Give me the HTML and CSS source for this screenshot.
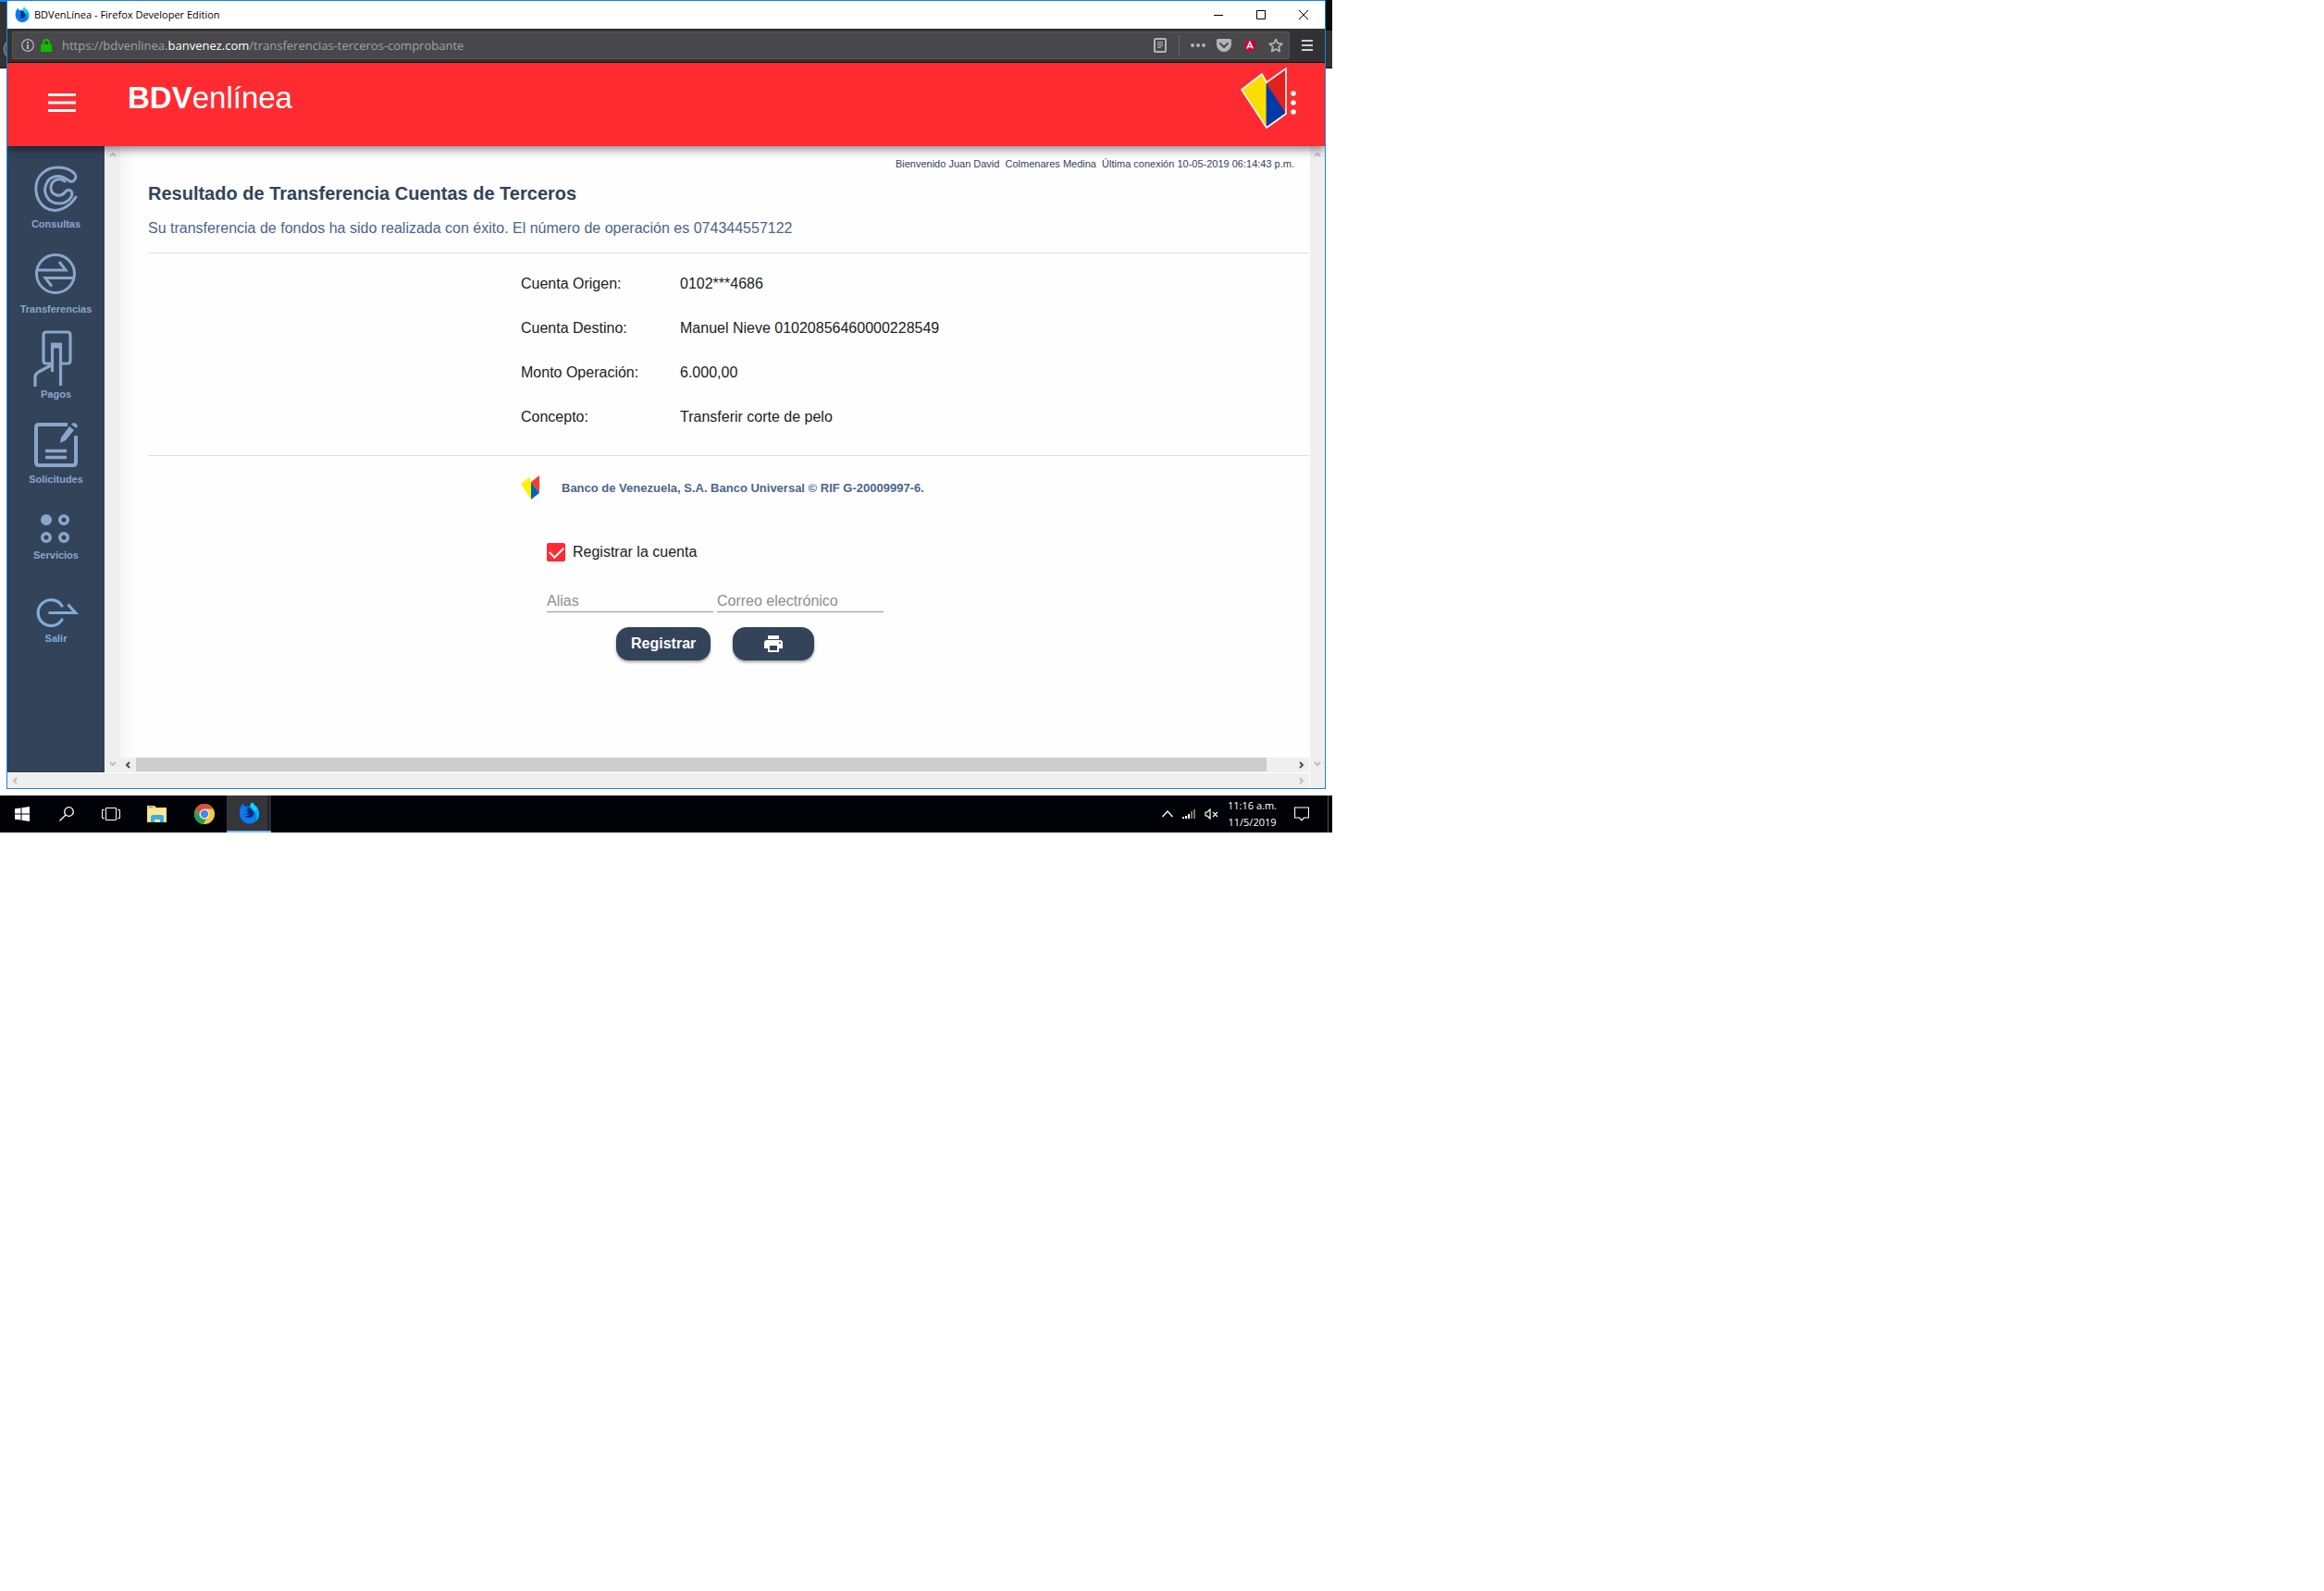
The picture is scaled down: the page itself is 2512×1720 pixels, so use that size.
FILE: index.html
```html
<!DOCTYPE html>
<html lang="es">
<head>
<meta charset="utf-8">
<title>BDVenLínea</title>
<link rel="stylesheet" href="styles.css">
</head>
<body>
<svg class="defs" aria-hidden="true">
  <symbol id="fox" viewBox="0 0 24 24">
    <path d="M1 12C1 8 2 4 5 1l2 4c2-1 4-1 6 0 0-2 1-4 3-5 0 2 2 3 4 5 2 2 3 5 3 8 0 6-5 11-11 11S1 19 1 12z" fill="#0a78f5"/>
    <path d="M16 0c0 2 2 3 4 5 2 2 3 5 3 8 0 3-1 6-3 8 1-4 0-8-2-11s-5-4-5-6 1-3 3-4z" fill="#00b8f8"/>
    <path d="M16 0c0 2 2 3 4 5l1 2c-2 1-3 3-3 3-2-3-5-4-5-6s1-3 3-4z" fill="#00ddff"/>
    <path d="M9 6c3-1 6 1 6 3 2 1 3 4 1 6-2 3-7 3-9 0 2 1 4 0 5-1l-5-1 3-1 1-1-3-2 3-1z" fill="#0b2a70"/>
  </symbol>
  <symbol id="up" viewBox="0 0 8 6"><path d="M1 5l3-3 3 3" fill="none" stroke="currentColor" stroke-width="2"/></symbol>
  <symbol id="down" viewBox="0 0 8 6"><path d="M1 1l3 3 3-3" fill="none" stroke="currentColor" stroke-width="2"/></symbol>
  <symbol id="left" viewBox="0 0 6 8"><path d="M5 1L2 4l3 3" fill="none" stroke="currentColor" stroke-width="2"/></symbol>
  <symbol id="right" viewBox="0 0 6 8"><path d="M1 1l3 3-3 3" fill="none" stroke="currentColor" stroke-width="2"/></symbol>
</svg>

<div class="desktop">
  <div class="stage">
    <div class="edge edge-left"></div>

    <section class="window">
      <div class="titlebar">
        <svg class="app-icon" width="16" height="16"><use href="#fox"/></svg>
        <span class="title">BDVenLínea - Firefox Developer Edition</span>
        <div class="controls">
          <button aria-label="Minimizar"><svg width="12" height="12"><path d="M1 6.500h10" stroke="#000"/></svg></button>
          <button aria-label="Maximizar"><svg width="12" height="12"><path d="M1.500 1.500h9v9h-9z" fill="none" stroke="#000"/></svg></button>
          <button aria-label="Cerrar"><svg width="12" height="12"><path d="M1 1l10 10M11 1L1 11" stroke="#000"/></svg></button>
        </div>
      </div>

      <div class="navbar">
        <div class="urlbar">
          <svg width="14" height="14"><circle cx="7" cy="7" r="6.300" fill="none" stroke="#b4b4b5" stroke-width="1.300"/><path d="M6 3h2v2H6zM6 6h2v5H6z" fill="#b4b4b5"/></svg>
          <svg class="lock" width="12" height="14"><path d="M0 6h12v8H0z" fill="#12bc00"/><path d="M3 7V4a3 3 0 0 1 6 0v3" fill="none" stroke="#12bc00" stroke-width="2"/></svg>
          <span class="url">https://bdvenlinea.<b>banvenez.com</b>/transferencias-terceros-comprobante</span>
          <svg class="reader" width="14" height="16"><rect x="1" y="1" width="12" height="14" rx="1" fill="none" stroke="#b4b4b5" stroke-width="2"/><path d="M4 4.500h6M4 6.500h6M4 8.500h6M4 10.500h4" stroke="#b4b4b5"/></svg>
          <span class="divider"></span>
          <svg class="dots" width="16" height="4" fill="#b4b4b5"><circle cx="2" cy="2" r="2"/><circle cx="8" cy="2" r="2"/><circle cx="14" cy="2" r="2"/></svg>
          <svg class="pocket" width="16" height="14"><path d="M1.500 0h13Q16 0 16 1.500V6a8 8 0 0 1-16 0V1.500Q0 0 1.500 0z" fill="#b4b4b5"/><path d="M4 5l4 4 4-4" fill="none" stroke="#48484a" stroke-width="2" stroke-linecap="round" stroke-linejoin="round"/></svg>
          <svg class="angular" width="12" height="13"><path d="M6 0l6 2-1 8-5 3-5-3L0 2z" fill="#dd0031"/><path d="M6 0l6 2-1 8-5 3z" fill="#c3002f"/><path d="M2.800 9.500L6 2.500l3.200 7M4 7.500h4" fill="none" stroke="#fff" stroke-width="1.500"/></svg>
          <svg class="star" width="16" height="16"><path d="M8 1.500l2 4.400 4.800.5-3.600 3.200 1.100 4.900L8 12l-4.300 2.500 1.100-4.900L1.200 6.400 6 5.900z" fill="none" stroke="#b4b4b5" stroke-width="1.800" stroke-linejoin="round"/></svg>
        </div>
        <button class="app-menu" aria-label="Menú"><svg width="12" height="12"><path d="M0 1h12M0 6h12M0 11h12" stroke="#d0d0d1" stroke-width="2"/></svg></button>
      </div>

      <header class="bank-header">
        <button class="burger" aria-label="Abrir menú"><svg width="30" height="20"><path d="M0 1.500h30M0 10h30M0 18.500h30" stroke="#fff" stroke-width="3"/></svg></button>
        <div class="brand"><b>BDV</b>enlínea</div>
        <svg class="bank-logo" width="52" height="68" viewBox="0 0 52 68">
          <path d="M2 25l22-17 5 9v48z" fill="#fbdd00"/>
          <path d="M29 17L50 2v50z" fill="#e2201c"/>
          <path d="M29 18l21 33-21 14z" fill="#0039a8"/>
          <path d="M28.500 19v44" stroke="#9aa13c" stroke-width="1"/>
          <path d="M2 25l22-17 5 9L50 2v49L29 66z" fill="none" stroke="#fff" stroke-width="1.600"/>
        </svg>
        <button class="more" aria-label="Más opciones"><svg width="6" height="26" fill="#fff"><circle cx="3" cy="3" r="2.800"/><circle cx="3" cy="13" r="2.800"/><circle cx="3" cy="23" r="2.800"/></svg></button>
      </header>

      <div class="page">
        <div class="page-view">
          <div class="page-row">
            <nav class="sidebar">
              <a href="#consultas"><svg viewBox="0 0 105 76" height="76" fill="none" stroke="#8ba6cc" stroke-width="3" stroke-linecap="round">
                <path d="M74 55C67 66 53 74 41 66.500C28 57 28 38 38 29C48 20 64 22 72 29C77 34 71 41 66 37C56 29 46 33 43 39C37 49 43 62 56 62C63 62 67 58 69 55C72 48 66 45 62 50C57 56 47 53 47 45C47 37 56 33 62 38"/></svg>Consultas</a>
              <a href="#transferencias"><svg viewBox="0 0 105 76" height="76" fill="none" stroke="#8ba6cc" stroke-width="3">
                <circle cx="52" cy="46" r="20.500"/><path d="M32 42h31l-7-9M72 50.500H41l7 9"/></svg>Transferencias</a>
              <a href="#pagos"><svg viewBox="0 0 105 76" height="76" fill="none" stroke="#8ba6cc" stroke-width="3.200">
                <path d="M47 51h-5q-3 0-3-3V20q0-3 3-3h23q3 0 3 3v28q0 3-3 3h-6M48.500 60V30h9v45M48 33h10M47 53l-13 7q-4 2-4 6v10"/></svg>Pagos</a>
              <a href="#solicitudes"><svg viewBox="0 0 105 76" height="76" fill="none" stroke="#8ba6cc" stroke-width="4">
                <path d="M65 25H34q-3 0-3 3v38q0 3 3 3h37q3 0 3-3V37" /><path d="M41 53.500h23M41 60.500h23" stroke-width="3.500"/><path d="M57 45l1-6 9-12 5 4-9 11zM69 25l2-2q3 0 5 3l-1 3z" fill="#8ba6cc" stroke="none"/></svg>Solicitudes</a>
              <a href="#servicios"><svg viewBox="0 0 105 66" height="66" fill="none" stroke="#8ba6cc" stroke-width="3.500">
                <circle cx="42" cy="36" r="4.300" fill="#8ba6cc"/><circle cx="61" cy="36" r="4.300"/><circle cx="42" cy="55" r="4.300"/><circle cx="61" cy="55" r="4.300"/></svg>Servicios</a>
              <a class="exit" href="#salir"><svg viewBox="0 0 105 74" height="74" fill="none" stroke="#7daedb" stroke-width="3.200">
                <path d="M59 47a14 14 0 1 0 0 15" stroke-linecap="round"/><path d="M44.500 54.500H73.500l-8-9"/></svg>Salir</a>
            </nav>
            <div class="vscroll">
              <svg width="8" height="6"><use href="#up"/></svg>
              <svg width="8" height="6"><use href="#down"/></svg>
            </div>

            <div class="content">
              <main class="result">
                <p class="welcome">Bienvenido Juan David&nbsp; Colmenares Medina&nbsp; Última conexión 10-05-2019 06:14:43 p.m.</p>
                <h1>Resultado de Transferencia Cuentas de Terceros</h1>
                <p class="message">Su transferencia de fondos ha sido realizada con éxito. El número de operación es 074344557122</p>
                <dl class="details">
                  <dt>Cuenta Origen:</dt><dd>0102***4686</dd>
                  <dt>Cuenta Destino:</dt><dd>Manuel Nieve 01020856460000228549</dd>
                  <dt>Monto Operación:</dt><dd>6.000,00</dd>
                  <dt>Concepto:</dt><dd>Transferir corte de pelo</dd>
                </dl>
                <div class="signature">
                  <svg width="20" height="26"><path d="M0 9l9-7 2 5v19z" fill="#fff200"/><path d="M11 7l9-7v19z" fill="#ff3b30"/><path d="M11 7l9 12-9 7z" fill="#0066b3"/></svg>
                  <span>Banco de Venezuela, S.A. Banco Universal © RIF G-20009997-6.</span>
                </div>
                <form class="register">
                  <label class="check"><input type="checkbox" checked><span>Registrar la cuenta</span></label>
                  <div class="fields">
                    <input type="text" placeholder="Alias" aria-label="Alias">
                    <input type="email" placeholder="Correo electrónico" aria-label="Correo electrónico">
                  </div>
                  <div class="actions">
                    <button type="button" class="pill">Registrar</button>
                    <button type="button" class="pill print" aria-label="Imprimir"><svg width="20" height="18" fill="#fff"><path d="M4 0h12v4H4zM3 5h14a3 3 0 0 1 3 3v6h-4v-3H4v3H0V8a3 3 0 0 1 3-3z"/><path d="M4 10h12v8H4z"/><path d="M6 11h8v5H6z" fill="#32435a"/><circle cx="17" cy="8" r="1" fill="#32435a"/></svg></button>
                  </div>
                </form>
              </main>
              <div class="hscroll hscroll-live">
                <svg width="6" height="8"><use href="#left"/></svg>
                <div class="thumb"></div>
                <svg width="6" height="8"><use href="#right"/></svg>
              </div>
            </div>
          </div>
          <div class="hscroll">
            <svg width="6" height="8"><use href="#left"/></svg>
            <svg width="6" height="8"><use href="#right"/></svg>
          </div>
        </div>
        <div class="vscroll vscroll-outer">
          <svg width="8" height="6"><use href="#up"/></svg>
          <svg width="8" height="6"><use href="#down"/></svg>
        </div>
      </div>
    </section>

    <div class="edge edge-right"></div>
  </div>

  <footer class="taskbar">
    <button aria-label="Inicio"><svg width="16" height="16" fill="#fff"><path d="M0 2.300l6.500-.9v6.100H0zM7.500 1.200L16 0v7.500H7.500zM0 8.500h6.500v6.100L0 13.700zM7.500 8.500H16V16l-8.500-1.200z"/></svg></button>
    <button aria-label="Buscar"><svg width="16" height="16" fill="none" stroke="#fff" stroke-width="1.300"><circle cx="10.500" cy="5.500" r="4.800"/><path d="M7 9l-6.500 6.500"/></svg></button>
    <button aria-label="Vista de tareas"><svg width="20" height="16" fill="none" stroke="#fff"><path d="M4.500 1.500h11v13h-11zM3 3.500H.5v9H3M17 3.500h2.500v9H17"/></svg></button>
    <button class="task-explorer" aria-label="Explorador de archivos"><svg width="22" height="18"><path d="M0 0h8l2 2h11v16H0z" fill="#ffd75e"/><path d="M1 3h20v14H1z" fill="#ffe794"/><path d="M4 18v-6q0-2 2-2h10q2 0 2 2v6h-4v-3H8v3z" fill="#35b1e8"/><path d="M2 1h4v1H2z" fill="#35b1e8"/></svg></button>
    <button class="task-chrome" aria-label="Chrome"><svg width="22" height="22" viewBox="0 0 22 22"><circle cx="11" cy="11" r="11" fill="#fbc93d"/><path d="M1.500 5.500A11 11 0 0 1 20.500 5.500H11A5.500 5.500 0 0 0 6 13z" fill="#d94f42"/><path d="M1.500 5.500L6.200 13.700A5.500 5.500 0 0 0 13 16L10 22A11 11 0 0 1 1.500 5.500z" fill="#1fa15e"/><circle cx="11" cy="11" r="5.300" fill="#f1f1f1"/><circle cx="11" cy="11" r="4.200" fill="#4a86f0"/></svg></button>
    <button class="active" aria-label="Firefox"><svg width="23" height="24"><use href="#fox"/></svg></button>
    <div class="tray">
      <svg width="12" height="8" fill="none" stroke="#fff" stroke-width="1.300"><path d="M.5 7L6 1l5.500 6"/></svg>
      <svg width="14" height="10"><path d="M0 8h2v2H0zM3 7h2v3H3zM6 5h2v5H6z" fill="#fff"/><path d="M9 2h2v8H9zM12 0h2v10h-2z" fill="#777"/></svg>
      <svg width="15" height="12" fill="none" stroke="#fff" stroke-width="1.200"><path d="M1 4h2l3-3v10L3 8H1zM9 4l5 5M14 4L9 9"/></svg>
      <time>11:16 a.m.<br>11/5/2019</time>
      <svg width="16" height="16" fill="none" stroke="#fff" stroke-width="1.200"><path d="M.5 1h15v11h-5L8 14.800 5.500 12h-5z"/></svg>
    </div>
  </footer>
</div>
</body>
</html>
```
FILE: styles.css
```css
* { box-sizing: border-box; }
body { margin: 0; background: #fff; font-family: "Liberation Sans", Arial, sans-serif; color: #212121; }
svg { display: block; flex: none; }
button { border: 0; padding: 0; margin: 0; background: none; font: inherit; color: inherit; display: flex; align-items: center; justify-content: center; flex: none; }
p, h1, dl, dd { margin: 0; }
.defs { position: absolute; width: 0; height: 0; }

.desktop { max-width: 1440px; }
.stage { display: flex; padding-bottom: 7px; }
.edge { width: 7px; height: 74px; background: #323234; border-bottom: 1px solid #0c0c0d; flex: none; }
.edge-left { border-top: 2px solid #0a84ff; background: radial-gradient(circle at 15px 51px, #59595b 10px, #77777a 10px, #77777a 11px, #323234 12px); }
.edge-right { border-top: 33px solid #0c0c0d; }

.window { flex: 1; min-width: 0; border: 1px solid #1a86d9; }

.titlebar { height: 30px; display: flex; align-items: center; padding-left: 8px; font: 11px/16px "Open Sans", "Noto Sans", sans-serif; color: #000; }
.title { margin-left: 5px; flex: 1; }
.controls { display: flex; }
.controls button { width: 46px; height: 30px; }

.navbar { height: 37px; display: flex; align-items: center; padding: 0 0 0 5px; background: #323234; border-bottom: 1px solid #0c0c0d; }
.urlbar { flex: 1; height: 30px; display: flex; align-items: center; padding: 0 6px 0 9px; background: #48484a; border: 1px solid #59595b; border-radius: 2px; }
.lock { margin-left: 7px; }
.url { flex: 1; margin-left: 11px; font: 13px/20px "Open Sans", "Noto Sans", sans-serif; color: #a2a2a3; white-space: nowrap; }
.url b { font-weight: 400; color: #fff; }
.divider { width: 1px; height: 22px; margin: 0 12px 0 13px; background: #5f6670; }
.pocket { margin-left: 12px; }
.angular { margin-left: 14px; }
.star { margin-left: 14px; }
.app-menu { width: 38px; height: 30px; }

.bank-header { position: relative; z-index: 1; height: 90px; display: flex; align-items: flex-start; padding: 0 31px 0 44px; background: #ff2b31; color: #fff; box-shadow: 0 3px 10px rgba(0, 0, 0, .5); clip-path: inset(0 0 -20px 0); }
.burger { margin-top: 33px; }
.brand { flex: 1; margin: 18px 0 0 56px; font-size: 33px; line-height: 40px; }
.bank-logo { margin-top: 4px; }
.more { margin-top: 30px; margin-left: 3px; }

.page { display: flex; background: #fff; }
.page-view { flex: 1; min-width: 0; }
.page-row { display: flex; }

.sidebar { width: 105px; flex: none; background: #32435a; }
.sidebar a { display: block; color: #8ba6cc; font-size: 11px; line-height: 16px; font-weight: 700; text-align: center; text-decoration: none; }
.sidebar svg { width: 105px; }
.sidebar .exit { color: #7daedb; }

.vscroll { width: 16px; margin-left: 1px; padding: 6px 0; display: flex; flex-direction: column; justify-content: space-between; align-items: center; background: #efefef; color: #bfbfbf; flex: none; }
.vscroll-outer { padding-bottom: 23px; }
.hscroll { height: 16px; margin-top: 1px; padding: 0 5px; display: flex; justify-content: space-between; align-items: center; background: #efefef; color: #bfbfbf; }
.hscroll-live { margin: 0; color: #505050; padding-bottom: 1px; }
.thumb { height: 15px; flex: 1; margin: 0 35px 0 6px; background: #cdcdcd; }

.content { flex: 1; min-width: 0; display: flex; flex-direction: column; }
.result { flex: 1; padding: 11px 0 105px 30px; background: linear-gradient(90deg, #f6f6f6, #fefefe 16px); }
.welcome { padding-right: 16px; font-size: 11px; line-height: 16px; text-align: right; color: #32435a; }
h1 { margin-top: 12px; font-size: 20px; line-height: 24px; color: #32435a; }
.message { margin-top: 14px; padding-bottom: 14px; line-height: 24px; font-size: 16px; color: #4d648d; border-bottom: 1px solid #dedede; }
.details { display: grid; grid-template-columns: 172px 1fr; padding: 9px 0 17px 403px; font-size: 16px; line-height: 48px; border-bottom: 1px solid #dedede; }
.signature { display: flex; align-items: center; gap: 24px; height: 28px; margin: 20px 0 0 403px; font-size: 13px; font-weight: 700; color: #4d648d; }
.register { margin: 44px 0 0 431px; }
.check { display: flex; align-items: center; gap: 8px; height: 24px; font-size: 16px; line-height: 24px; }
.check input { appearance: none; width: 20px; height: 20px; margin: 0; border-radius: 2px; background: #ff2b31; display: grid; place-items: center; }
.check input:checked::before { content: ""; width: 7px; height: 13px; margin-bottom: 3px; border: solid #fff; border-width: 0 2px 2px 0; transform: rotate(45deg); }
.fields { display: flex; gap: 4px; margin-top: 28px; }
.fields input { width: 180px; height: 25px; padding: 1px 0 0; border: 0; border-bottom: 1px solid #949494; border-radius: 0; background: none; font: 16px/23px "Liberation Sans", Arial, sans-serif; outline: 0; }
.fields input::placeholder { color: #8e8e8e; opacity: 1; }
.actions { display: flex; gap: 24px; margin: 16px 0 0 75px; }
.pill { height: 36px; padding: 0 16px; border-radius: 14px; background: #32435a; color: #fff; font-size: 16px; font-weight: 700; box-shadow: 0 2px 3px rgba(0, 0, 0, .35); }
.print { width: 88px; }

.taskbar { height: 40px; display: flex; align-items: stretch; background: #010208; color: #fff; }
.taskbar button { width: 48px; }
.taskbar .task-explorer { width: 52px; }
.taskbar .task-chrome { width: 49px; }
.taskbar .active { background: linear-gradient(90deg, #35363a 44px, #1e1f22 44px, #1e1f22 45px, #2a2b2e 45px); border-bottom: 2px solid #76b9ed; }
.tray { flex: 1; display: flex; align-items: center; justify-content: flex-end; gap: 10px; margin-right: 4px; padding-right: 20px; border-right: 1px solid #555; }
.tray time { font: 11px/18px "Open Sans", "Noto Sans", sans-serif; text-align: center; }
.tray time + svg { margin-left: 9px; }
```
